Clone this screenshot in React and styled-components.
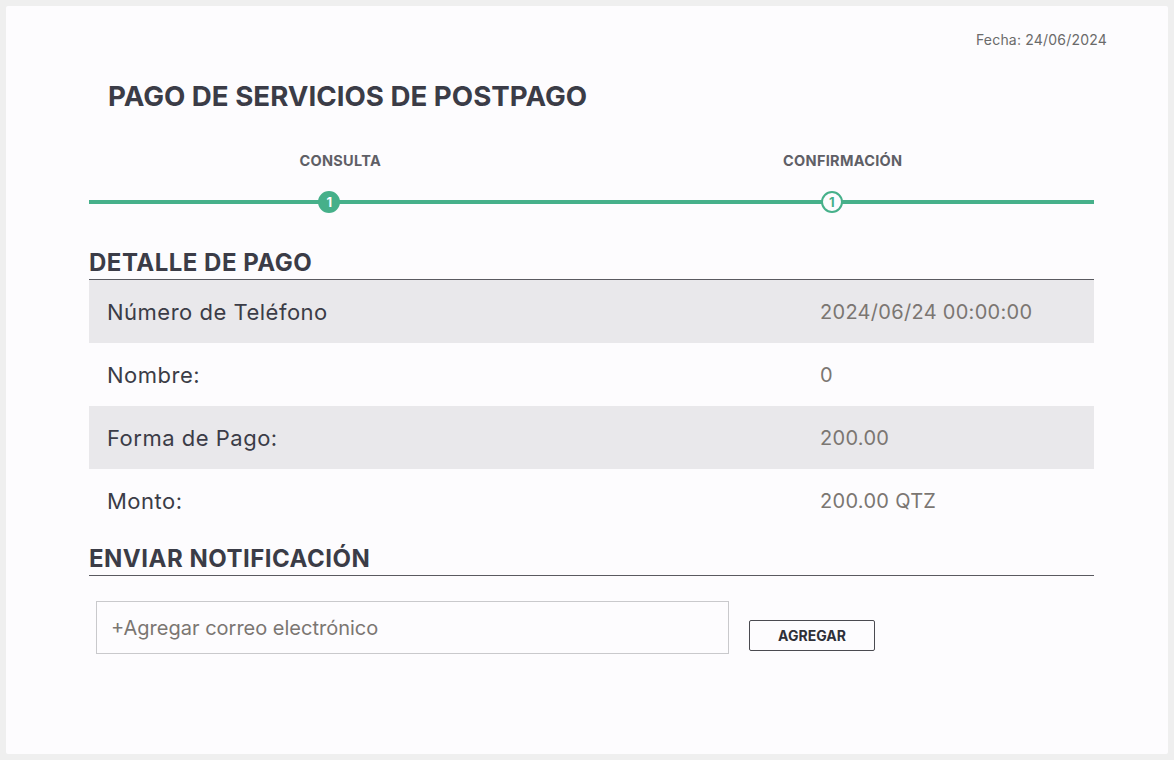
import React from 'react';
import styled, { createGlobalStyle } from 'styled-components';

const GlobalStyle = createGlobalStyle`
  body {
    margin: 0;
    background: #efefef;
    font-family: 'Inter', 'Noto Sans', sans-serif;
  }
`;

const Card = styled.main`
  margin: 6px;
  width: 1162px;
  height: 748px;
  box-sizing: border-box;
  padding: 26px 74px 0 83px;
  background: #fdfcfe;
  border-radius: 2px;
`;

const DateLine = styled.div`
  margin-right: -13px;
  text-align: right;
  font-size: 14px;
  line-height: 16px;
  letter-spacing: 0.2px;
  color: #6a6a6a;
`;

const Title = styled.h1`
  margin: 32px 0 0 19px;
  font-size: 27.7px;
  line-height: 32px;
  font-weight: 700;
  color: #3b3c47;
`;

const Stepper = styled.div`
  display: grid;
  grid-template-columns: 1fr 1fr;
  margin-top: 41px;
`;

const Step = styled.div`
  display: flex;
  flex-direction: column;
  align-items: center;
`;

const StepLabel = styled.span`
  font-size: 14.5px;
  line-height: 16px;
  letter-spacing: 0.3px;
  font-weight: 700;
  color: #5f5f66;
`;

const Track = styled.div`
  position: relative;
  align-self: stretch;
  height: 22px;
  margin-top: 22px;
  display: flex;
  align-items: center;
  justify-content: center;

  &::before {
    content: '';
    position: absolute;
    left: 0;
    right: 0;
    top: 9px;
    height: 4px;
    background: #46b08a;
  }
`;

const Dot = styled.span`
  position: relative;
  z-index: 1;
  margin-left: -22px;
  width: 22px;
  height: 22px;
  box-sizing: border-box;
  border-radius: 50%;
  border: 2px solid #46b08a;
  background: ${(p) => (p.active ? '#46b08a' : '#fdfcfe')};
  color: ${(p) => (p.active ? '#ffffff' : '#46b08a')};
  font-size: 13px;
  font-weight: 700;
  display: flex;
  align-items: center;
  justify-content: center;
`;

const SectionTitle = styled.h2`
  margin: ${(p) => p.top}px 0 0;
  padding-bottom: 2px;
  border-bottom: 1px solid #5a5a60;
  font-size: 24px;
  line-height: 28px;
  letter-spacing: 0.5px;
  font-weight: 700;
  color: #3b3c47;
`;

const Row = styled.div`
  display: grid;
  grid-template-columns: 713px 1fr;
  align-items: center;
  height: 63px;
  padding-left: 18px;
  background: ${(p) => (p.shaded ? '#e9e8eb' : 'transparent')};
`;

const Label = styled.span`
  font-size: 22px;
  letter-spacing: 0.5px;
  color: #3b3c47;
`;

const Value = styled.span`
  font-size: 20px;
  letter-spacing: 0.3px;
  color: #7b7672;
`;

const NotifyRow = styled.div`
  display: flex;
  align-items: flex-start;
  gap: 20px;
  margin: 25px 0 0 7px;
`;

const EmailInput = styled.input`
  width: 633px;
  height: 53px;
  box-sizing: border-box;
  padding: 0 14px;
  border: 1px solid #c9c9cc;
  background: #fdfcfe;
  font-family: inherit;
  font-size: 20px;
  color: #3b3c47;
  outline: none;

  &::placeholder {
    color: #7b7672;
  }
`;

const AddButton = styled.button`
  margin-top: 19px;
  width: 126px;
  height: 31px;
  border: 1px solid #4a4a50;
  border-radius: 2px;
  background: #fdfcfe;
  font-family: inherit;
  font-size: 14px;
  font-weight: 700;
  color: #2f3038;
  cursor: pointer;
`;

const details = [
  { label: 'Número de Teléfono', value: '2024/06/24 00:00:00' },
  { label: 'Nombre:', value: '0' },
  { label: 'Forma de Pago:', value: '200.00' },
  { label: 'Monto:', value: '200.00 QTZ' },
];

export default function App() {
  return (
    <>
      <GlobalStyle />
      <Card>
        <DateLine>Fecha: 24/06/2024</DateLine>
        <Title>PAGO DE SERVICIOS DE POSTPAGO</Title>

        <Stepper>
          <Step>
            <StepLabel>CONSULTA</StepLabel>
            <Track>
              <Dot active>1</Dot>
            </Track>
          </Step>
          <Step>
            <StepLabel>CONFIRMACIÓN</StepLabel>
            <Track>
              <Dot>1</Dot>
            </Track>
          </Step>
        </Stepper>

        <SectionTitle top={36}>DETALLE DE PAGO</SectionTitle>
        {details.map((d, i) => (
          <Row key={d.label} shaded={i % 2 === 0}>
            <Label>{d.label}</Label>
            <Value>{d.value}</Value>
          </Row>
        ))}

        <SectionTitle top={13}>ENVIAR NOTIFICACIÓN</SectionTitle>
        <NotifyRow>
          <EmailInput placeholder="+Agregar correo electrónico" />
          <AddButton>AGREGAR</AddButton>
        </NotifyRow>
      </Card>
    </>
  );
}
